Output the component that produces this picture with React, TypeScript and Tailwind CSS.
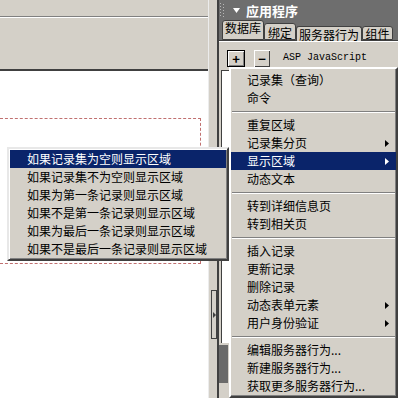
import React from "react";

type Item = { t?: string; sub?: boolean; on?: boolean; sep?: boolean };

const menu: Item[] = [
  { t: "记录集（查询）" },
  { t: "命令" },
  { sep: true },
  { t: "重复区域" },
  { t: "记录集分页", sub: true },
  { t: "显示区域", sub: true, on: true },
  { t: "动态文本" },
  { sep: true },
  { t: "转到详细信息页" },
  { t: "转到相关页" },
  { sep: true },
  { t: "插入记录" },
  { t: "更新记录" },
  { t: "删除记录" },
  { t: "动态表单元素", sub: true },
  { t: "用户身份验证", sub: true },
  { sep: true },
  { t: "编辑服务器行为..." },
  { t: "新建服务器行为..." },
  { t: "获取更多服务器行为..." },
];

const subMenu = [
  "如果记录集为空则显示区域",
  "如果记录集不为空则显示区域",
  "如果为第一条记录则显示区域",
  "如果不是第一条记录则显示区域",
  "如果为最后一条记录则显示区域",
  "如果不是最后一条记录则显示区域",
];

function Arrow({ white }: { white?: boolean }) {
  return (
    <svg width="4" height="7" viewBox="0 0 4 7" className="ml-auto">
      <polygon points="0,0 4,3.5 0,7" fill={white ? "#fff" : "#000"} />
    </svg>
  );
}

function Tab({ label, size, active }: { label: string; size: string; active?: boolean }) {
  return (
    <div
      className={`${size} shrink-0 flex justify-center whitespace-nowrap bg-[#d4d0c8] border-t border-l border-r border-[#404040] rounded-t-[3px] ${
        active ? "relative z-10 -mb-px" : "border-b"
      }`}
    >
      <span className="leading-[14px] text-[12px]">{label}</span>
    </div>
  );
}

export default function App() {
  return (
    <div className="w-[398px] h-[398px] relative overflow-hidden flex bg-[#d4d0c8] text-[12px] text-black font-['Noto_Sans_CJK_SC',sans-serif]">
      {/* document area */}
      <div className="w-[208px] flex flex-col">
        <div className="h-[17px] border-b border-[#808080]" />
        <div className="h-[54px] border-t border-white border-b-2 border-b-[#404040]" />
        <div className="flex-1 bg-white pt-[47px]">
          <div className="w-[201px] h-[146px] border-t border-r border-b border-dashed border-[#c07070]" />
        </div>
      </div>

      {/* splitter */}
      <div className="w-[11px] flex flex-col border-l border-[#ececec] border-r-2 border-r-[#404040]">
        <div className="mt-[290px] ml-[2px] w-[6px] h-[49px] border border-[#404040] bg-[#d4d0c8] flex items-center justify-center">
          <svg width="3" height="6" viewBox="0 0 3 6">
            <polygon points="0,0 3,3 0,6" fill="#404040" />
          </svg>
        </div>
      </div>

      {/* panel */}
      <div className="w-[179px] flex flex-col">
        <div className="h-[20px] bg-[#6e6e6e] flex items-center">
          <svg width="6" height="16" viewBox="0 0 6 16" className="ml-[1px]">
            {[0, 3, 6, 9, 12].map((y) => (
              <g key={y}>
                <rect x="0" y={y + 1} width="1" height="1" fill="#b8b8b8" />
                <rect x="3" y={y + 2} width="1" height="1" fill="#b8b8b8" />
              </g>
            ))}
          </svg>
          <svg width="7" height="5" viewBox="0 0 7 5" className="ml-[7px]">
            <polygon points="0,0 7,0 3.5,5" fill="#fff" />
          </svg>
          <span className="ml-[6px] text-white font-bold text-[13px] leading-none">应用程序</span>
        </div>
        <div className="h-[21px] bg-[#6e6e6e] flex items-end pl-[3px] border-b border-[#404040]">
          <Tab label="数据库" size="w-[42px] h-[20px]" />
          <Tab label="绑定" size="w-[32px] h-[17px] pt-[2px]" />
          <Tab label="服务器行为" size="w-[66px] h-[15px] pt-[1px]" active />
          <Tab label="组件" size="w-[31px] h-[14px]" />
        </div>
        <div className="flex-1 flex flex-col border-t border-white">
          <div className="flex items-center h-[28px] pl-[8px] pt-[4px]">
            <div className="w-[18px] h-[17px] border border-black flex items-center justify-center bg-[#d4d0c8] shadow-[inset_1px_1px_#fff,inset_-1px_-1px_#808080]">
              <span className="font-bold text-[13px] leading-none">+</span>
            </div>
            <div className="ml-[9px] w-[16px] h-[17px] flex items-center justify-center bg-[#d4d0c8] shadow-[inset_1px_1px_#fff,inset_-1px_-1px_#404040]">
              <span className="font-bold text-[13px] leading-none">−</span>
            </div>
            <span className="ml-[13px] font-['Liberation_Mono',monospace] text-[10px] leading-none">
              ASP JavaScript
            </span>
          </div>
          <div className="h-[273px] ml-[2px] bg-white border-l border-t border-[#404040]" />
          <div className="flex-1 flex pt-[2px]">
            <div className="w-[9px] h-[38px] bg-[#6a6a6a]" />
          </div>
        </div>
      </div>

      {/* main context menu */}
      <div className="absolute left-[229px] top-[67px] w-[169px] h-[331px] bg-[#d4d0c8] border-2 border-t-white border-l-white border-r-[#404040] border-b-[#404040] shadow-[inset_-1px_-1px_#808080] pt-[2px]">
        {menu.map((m, i) =>
          m.sep ? (
            <div key={i} className="h-[9px] flex items-center px-[1px]">
              <div className="w-full h-[2px] border-t border-[#808080] border-b border-b-white" />
            </div>
          ) : (
            <div
              key={i}
              className={`h-[18px] flex items-center pl-[16px] pr-[7px] ${m.on ? "bg-[#0a246a] text-white" : ""}`}
            >
              <span className="leading-none">{m.t}</span>
              {m.sub && <Arrow white={m.on} />}
            </div>
          )
        )}
      </div>

      {/* sub menu */}
      <div className="absolute left-[7px] top-[147px] w-[222px] h-[114px] bg-[#d4d0c8] border-2 border-t-[#e8e8e8] border-l-[#e8e8e8] border-r-[#404040] border-b-[#404040] shadow-[inset_1px_1px_#fff,inset_-1px_-1px_#808080] pt-[1px] px-[1px]">
        {subMenu.map((s, i) => (
          <div
            key={i}
            className={`h-[18px] flex items-center pl-[17px] ${i === 0 ? "bg-[#0a246a] text-white" : ""}`}
          >
            <span className="leading-none">{s}</span>
          </div>
        ))}
      </div>
    </div>
  );
}
